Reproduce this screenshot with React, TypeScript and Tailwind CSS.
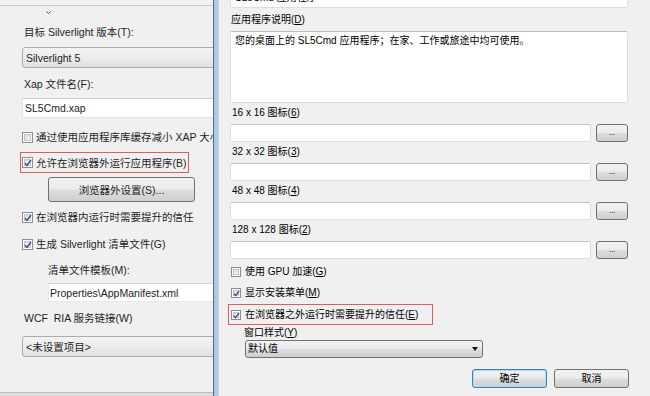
import React from "react";

const FONT = '"Liberation Sans","Noto Sans CJK SC",sans-serif';

function Check({ checked, size = 11 }: { checked?: boolean; size?: number }) {
  return (
    <span
      className="relative inline-block shrink-0 border border-[#8e8f8f] bg-white p-[1px]"
      style={{ width: size, height: size }}
    >
      <span className="block w-full h-full border border-[#c2c5ca] bg-[linear-gradient(135deg,#d9dbde_0%,#f6f6f6_100%)]" />
      {checked && (
        <svg
          className="absolute left-[1px] top-[1px]"
          width={size - 3}
          height={size - 3}
          viewBox="0 0 8 8"
        >
          <path d="M1 4.2 L3 6.4 L7 1" fill="none" stroke="#3a4f8c" strokeWidth="1.5" />
        </svg>
      )}
    </span>
  );
}

const U = ({ c }: { c: string }) => <span className="underline">{c}</span>;

function Btn({ children, w, h, def, extra = "" }: { children: React.ReactNode; w: number; h: number; def?: boolean; extra?: string }) {
  return (
    <div
      className={`flex items-center justify-center rounded-[3px] border ${def ? "border-[#3c7fb1] shadow-[inset_0_0_0_1px_#a9dcf6]" : "border-[#707070]"} bg-[linear-gradient(180deg,#f2f2f2_0%,#ebebeb_48%,#dddddd_52%,#cfcfcf_100%)] ${extra}`}
      style={{ width: w, height: h }}
    >
      {children}
    </div>
  );
}

function LeftPanel() {
  return (
    <div className="w-[213px] h-full shrink-0 flex flex-col overflow-hidden bg-[#f0f0f0] text-[#1e1e1e] text-[10.5px] leading-[16px]">
      <div className="h-[6px] shrink-0 border-b border-[#c9c9c9]" />
      <div className="h-[18px] shrink-0 pl-[46px] pt-[5px]">
        <svg width="5" height="3" viewBox="0 0 5 3" className="block">
          <path d="M0.5 0.5 L2.5 2.5 L4.5 0.5" fill="none" stroke="#444" strokeWidth="1" />
        </svg>
      </div>
      <div className="h-[16px] shrink-0 pl-[24px] whitespace-nowrap">目标 Silverlight 版本(T):</div>
      <div className="mt-[7px] h-[21px] w-[300px] shrink-0 ml-[22px] rounded-[3px] border border-[#acacac] bg-[linear-gradient(180deg,#f3f3f3_0%,#ececec_50%,#e1e1e1_100%)] flex items-center pl-[3px] whitespace-nowrap">
        Silverlight 5
      </div>
      <div className="mt-[8px] h-[16px] shrink-0 pl-[24px] whitespace-nowrap">Xap 文件名(F):</div>
      <div className="mt-[6px] h-[20px] w-[300px] shrink-0 ml-[22px] bg-white border border-[#e3e3e3] border-t-[#d0d0d0] flex items-center pl-[2px] whitespace-nowrap">
        SL5Cmd.xap
      </div>
      <div className="mt-[11px] h-[16px] shrink-0 pl-[22px] flex items-center gap-[3px] whitespace-nowrap">
        <Check />
        <span>通过使用应用程序库缓存减小 XAP 大小</span>
      </div>
      <div className="mt-[7px] h-[21px] w-[169px] shrink-0 ml-[20px] border border-[#e25b62] flex items-center pl-[1px] gap-[3px] whitespace-nowrap">
        <Check checked />
        <span>允许在浏览器外运行应用程序(B)</span>
      </div>
      <Btn w={147} h={25} extra="mt-[4px] ml-[48px] shrink-0 whitespace-nowrap">
        浏览器外设置(S)...
      </Btn>
      <div className="mt-[7px] h-[16px] shrink-0 pl-[22px] flex items-center gap-[3px] whitespace-nowrap">
        <Check checked />
        <span>在浏览器内运行时需要提升的信任</span>
      </div>
      <div className="mt-[11px] h-[16px] shrink-0 pl-[22px] flex items-center gap-[3px] whitespace-nowrap">
        <Check checked />
        <span>生成 Silverlight 清单文件(G)</span>
      </div>
      <div className="mt-[10px] h-[16px] shrink-0 pl-[48px] whitespace-nowrap">清单文件模板(M):</div>
      <div className="mt-[5px] h-[19px] w-[300px] shrink-0 ml-[48px] bg-white border border-[#e8e8e8] border-t-[#d6d6d6] flex items-center pl-[1px] whitespace-nowrap">
        Properties\AppManifest.xml
      </div>
      <div className="mt-[8px] h-[16px] shrink-0 pl-[24px] whitespace-nowrap">WCF&nbsp; RIA 服务链接(W)</div>
      <div className="mt-[10px] h-[21px] w-[300px] shrink-0 ml-[22px] rounded-[3px] border border-[#acacac] bg-[linear-gradient(180deg,#f3f3f3_0%,#ececec_50%,#e1e1e1_100%)] flex items-center pl-[3px] whitespace-nowrap">
        &lt;未设置项目&gt;
      </div>
      <div className="flex-1" />
      <div className="h-[4px] shrink-0 border-t border-[#bdbdbd] bg-[#dcdcdc]" />
    </div>
  );
}

function IconGroup({ label, k }: { label: string; k: string }) {
  return (
    <>
      <div className="mt-[2px] h-[16px] shrink-0 pl-[2px] whitespace-nowrap">
        {label} 图标(<U c={k} />)
      </div>
      <div className="mt-[3px] h-[18px] shrink-0 flex gap-[5px]">
        <div className="w-[361px] h-full bg-white border border-[#dedede] border-t-[#c4c4c4] rounded-[2px]" />
        <Btn w={32} h={18}>
          <span className="text-[9px] leading-none tracking-[-0.5px] text-[#6a3030] -mt-[2px]">...</span>
        </Btn>
      </div>
    </>
  );
}

function Dialog() {
  return (
    <div className="w-[430px] h-full shrink-0 flex flex-col overflow-hidden bg-[#f0f0f0] pl-[10px] pr-[22px] text-black text-[10px] leading-[16px]">
      <div className="mt-[-12px] h-[20px] shrink-0 bg-white border border-[#dedede] rounded-[2px] flex items-center pl-[4px] whitespace-nowrap">
        SL5Cmd 应用程序
      </div>
      <div className="mt-[4px] h-[16px] shrink-0 pl-[1px] whitespace-nowrap">
        应用程序说明(<U c="D" />)
      </div>
      <div className="mt-[3px] h-[72px] shrink-0 bg-white border border-[#dedede] border-t-[#bdbdbd] rounded-[2px] px-[4px] pt-[1px] whitespace-nowrap">
        您的桌面上的 SL5Cmd 应用程序；在家、工作或旅途中均可使用。
      </div>
      <IconGroup label="16 x 16" k="6" />
      <IconGroup label="32 x 32" k="3" />
      <IconGroup label="48 x 48" k="4" />
      <IconGroup label="128 x 128" k="2" />
      <div className="mt-[5px] h-[16px] shrink-0 pl-[1px] flex items-center gap-[4px] whitespace-nowrap">
        <Check size={10} />
        <span>使用 GPU 加速(<U c="G" />)</span>
      </div>
      <div className="mt-[5px] h-[16px] shrink-0 pl-[1px] flex items-center gap-[4px] whitespace-nowrap">
        <Check size={10} checked />
        <span>显示安装菜单(<U c="M" />)</span>
      </div>
      <div className="mt-[3px] ml-[-2px] h-[21px] w-[205px] shrink-0 border border-[#e25b62] flex items-center pl-[2px] gap-[4px] whitespace-nowrap">
        <Check size={10} checked />
        <span>在浏览器之外运行时需要提升的信任(<U c="E" />)</span>
      </div>
      <div className="h-[15px] leading-[15px] shrink-0 pl-[14px] whitespace-nowrap">
        窗口样式(<U c="Y" />)
      </div>
      <div className="mt-[0px] ml-[15px] h-[18px] w-[238px] shrink-0 rounded-[3px] border border-[#707070] bg-[linear-gradient(180deg,#f2f2f2_0%,#ebebeb_48%,#dddddd_52%,#cfcfcf_100%)] flex items-center justify-between pl-[2px] pr-[4px]">
        <span>默认值</span>
        <svg width="6" height="4" viewBox="0 0 6 4">
          <path d="M0 0 H6 L3 4 Z" fill="#111" />
        </svg>
      </div>
      <div className="mt-[11px] h-[19px] shrink-0 flex justify-end gap-[7px] mr-[-1px]">
        <Btn w={75} h={19} def>
          确定
        </Btn>
        <Btn w={75} h={19}>
          取消
        </Btn>
      </div>
    </div>
  );
}

export default function App() {
  return (
    <div className="w-[650px] h-[396px] flex overflow-hidden bg-[#f0f0f0]" style={{ fontFamily: FONT }}>
      <LeftPanel />
      <div className="w-[1px] h-full shrink-0 bg-[#5e6d7c]" />
      <div className="w-[5px] h-full shrink-0 bg-[linear-gradient(90deg,#a8c3e2,#bcd3ec)]" />
      <div className="w-[1px] h-full shrink-0 bg-[#eef3f8]" />
      <Dialog />
    </div>
  );
}
